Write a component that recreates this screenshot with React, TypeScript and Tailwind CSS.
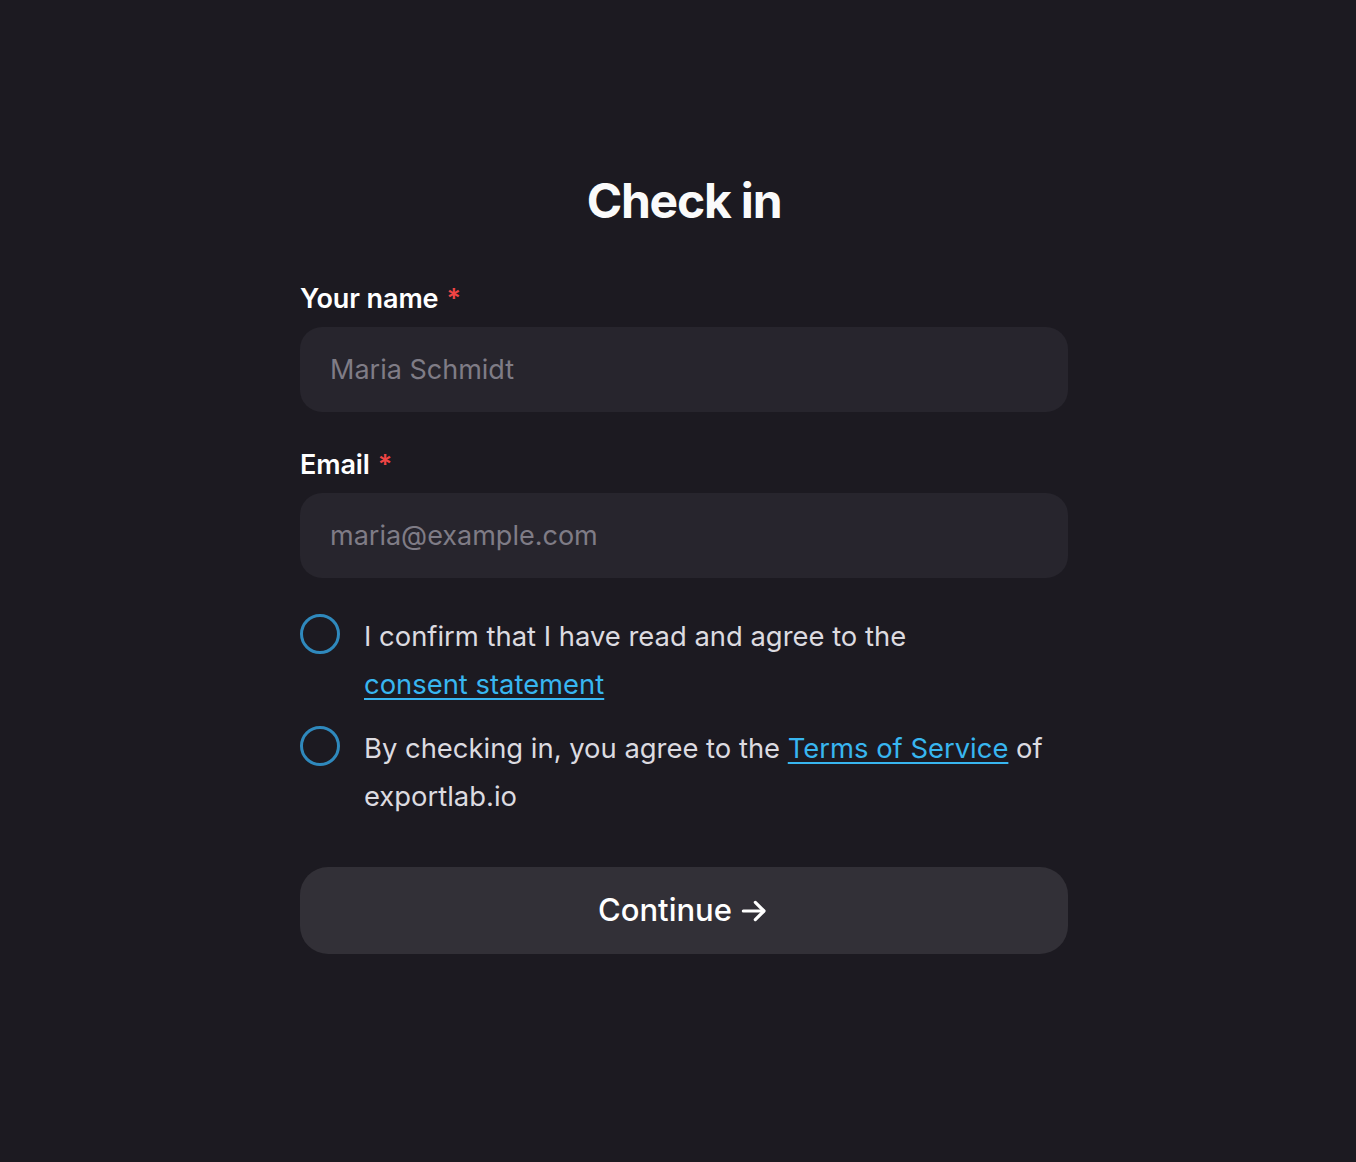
import React from 'react';

const Required = () => <span className="ml-2 text-[#ef4444]">*</span>;

const Field = ({ label, placeholder, type }: { label: string; placeholder: string; type: string }) => (
  <div className="flex flex-col">
    <label className="text-[27px] leading-[32px] font-semibold tracking-[-0.1px] text-white">
      {label}
      <Required />
    </label>
    <input
      type={type}
      placeholder={placeholder}
      className="mt-[12px] h-[85px] w-full rounded-[22px] bg-[#27252d] px-[30px] text-[27px] text-white placeholder:text-[#7f7c86] outline-none"
    />
  </div>
);

const Check = ({ children }: { children: React.ReactNode }) => (
  <label className="flex items-start gap-[24px]">
    <span className="mt-[2px] h-[40px] w-[40px] shrink-0 rounded-full border-[3px] border-[#2f89bd]" />
    <span className="text-[27.4px] leading-[48px] text-[#dcdbe0]">{children}</span>
  </label>
);

const Link = ({ children }: { children: React.ReactNode }) => (
  <a href="#" className="whitespace-nowrap text-[#38b6f0] underline underline-offset-[4px] decoration-2">
    {children}
  </a>
);

export default function App() {
  return (
    <div className="min-h-[1162px] bg-[#1c1a21] pl-[12px] font-['Inter',sans-serif]">
      <div className="mx-auto w-[768px] pt-[177px]">
        <h1 className="text-center text-[48px] leading-[48px] font-bold tracking-[-1.2px] text-[#fafafa]">Check in</h1>
        <div className="mt-[58px] flex flex-col gap-[37px]">
          <Field label="Your name" placeholder="Maria Schmidt" type="text" />
          <Field label="Email" placeholder="maria@example.com" type="email" />
        </div>
        <div className="mt-[34px] flex flex-col gap-[16px]">
          <Check>
            I confirm that I have read and agree to the <Link>consent statement</Link>
          </Check>
          <Check>
            By checking in, you agree to the <Link>Terms of Service</Link> of exportlab.io
          </Check>
        </div>
        <button className="mt-[47px] flex h-[87px] w-full items-center justify-center gap-[6px] rounded-[28px] bg-[#323037] text-[31px] font-medium text-white">
          Continue
          <svg width="32" height="32" viewBox="0 0 24 24" fill="none" stroke="currentColor" strokeWidth="2.4" strokeLinecap="round" strokeLinejoin="round">
            <path d="M4 12h15" />
            <path d="M13 5.5l6.5 6.5-6.5 6.5" />
          </svg>
        </button>
      </div>
    </div>
  );
}
